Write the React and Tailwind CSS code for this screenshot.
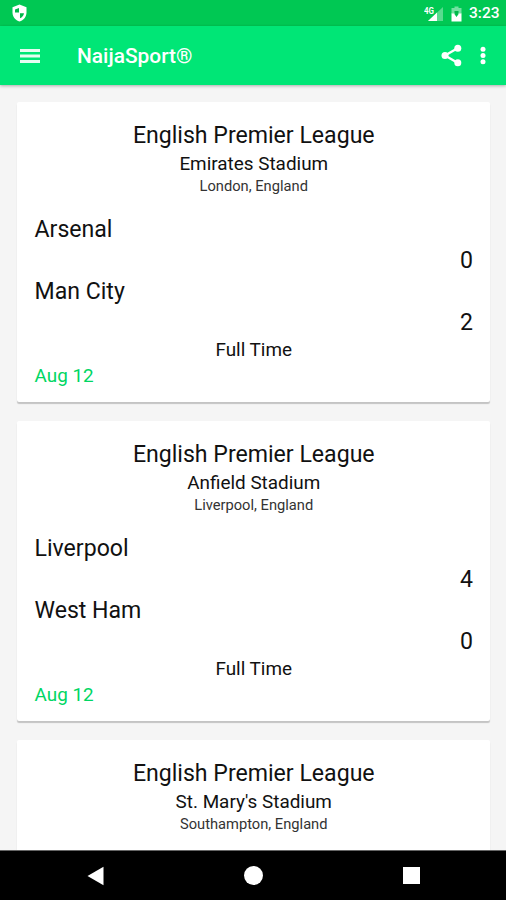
const matches = [
    { id: 1, stadium: 'Emirates Stadium', location: 'London, England', home: 'Arsenal', homeScore: 0, away: 'Man City', awayScore: 2, status: 'Full Time', date: 'Aug 12' },
    { id: 2, stadium: 'Anfield Stadium', location: 'Liverpool, England', home: 'Liverpool', homeScore: 4, away: 'West Ham', awayScore: 0, status: 'Full Time', date: 'Aug 12' },
    { id: 3, stadium: "St. Mary's Stadium", location: 'Southampton, England' },
];

function StatusBar() {
    return (
        <div className="flex h-[26px] shrink-0 items-center bg-[#00c853] pl-[12px] pr-[8px] text-white">
            <svg className="h-[18px] w-[15px]" viewBox="0 0 15 18">
                <path fill="#fff" d="M7.5 0.5 L14.5 3.3 V8.5 C14.5 12.7 11.5 16.4 7.5 17.5 C3.5 16.4 0.5 12.7 0.5 8.5 V3.3 Z" />
                <path fill="#00b84a" d="M7 4 V8.5 H3 V5.5 Z M8 9.2 H12 C11.6 11.6 10.2 13.4 8 14.3 Z" />
            </svg>
            <div className="ml-auto flex items-center pt-px">
                <svg className="h-[16px] w-[20px]" viewBox="0 0 20 16">
                    <path fill="#fff" fillOpacity="0.35" d="M19 1 V15 H4 Z" />
                    <path fill="#fff" d="M13 6.6 V15 H4 Z" />
                    <text x="0" y="7.5" fill="#fff" fontSize="9.5" fontWeight="700" fontFamily="Roboto, sans-serif" textLength="10" lengthAdjust="spacingAndGlyphs">4G</text>
                </svg>
                <svg className="ml-[7px] h-[16px] w-[11px]" viewBox="0 0 11 16">
                    <path fill="#fff" fillOpacity="0.45" d="M3.5 0.5 H7.5 V2 H10.5 V8 H0.5 V2 H3.5 Z" />
                    <path fill="#fff" d="M0.5 7.5 H3 L5.5 11 L8 7.5 H10.5 V15.5 H0.5 Z" />
                    <path fill="#00b84a" d="M3.5 5 H7.5 V7 L5.5 9.5 L3.5 7 Z" />
                </svg>
                <span className="ml-[7px] w-[29px] whitespace-nowrap pt-px text-[15.5px] font-medium leading-none">3:23</span>
            </div>
        </div>
    );
}

function AppBar() {
    return (
        <header className="relative z-10 flex h-[59px] shrink-0 items-center bg-[#00e676] pl-[20px] pr-[20px] text-white shadow-[0_1px_3px_rgba(0,0,0,0.3)]">
            <svg className="h-[14px] w-[20px]" viewBox="0 0 20 14" fill="#fff" fillOpacity="0.9">
                <rect width="20" height="3" />
                <rect y="5.5" width="20" height="3" />
                <rect y="11" width="20" height="3" />
            </svg>
            <h1 className="ml-[37px] pt-px text-[20.9px] font-medium leading-none">NaijaSport®</h1>
            <svg className="ml-auto h-[23px] w-[21px]" viewBox="0 0 21 23" fill="#fff">
                <path d="M16.5 4.2 L4 11.5 L16.5 18.8" fill="none" stroke="#fff" strokeWidth="2.3" />
                <circle cx="16.8" cy="4.2" r="3.5" />
                <circle cx="4" cy="11.5" r="3.5" />
                <circle cx="16.8" cy="18.8" r="3.5" />
            </svg>
            <svg className="ml-[18px] h-[19px] w-[6px]" viewBox="0 0 6 19" fill="#fff">
                <circle cx="3" cy="3.2" r="2.5" />
                <circle cx="3" cy="9.5" r="2.5" />
                <circle cx="3" cy="15.8" r="2.5" />
            </svg>
        </header>
    );
}

function MatchCard({ match }) {
    return (
        <div className="h-[300px] shrink-0 rounded-[2px] bg-white pl-[17.5px] pr-[17px] pt-[18px] text-[23.1px] leading-[31px] text-[#111] shadow-[0_2px_1px_rgba(0,0,0,0.2)]">
            <div className="text-center">
                <h2>English Premier League</h2>
                <p className="text-[18.9px] leading-[25px]">{match.stadium}</p>
                <p className="text-[14.7px] leading-[20px] text-[#333]">{match.location}</p>
            </div>
            {match.status && (
                <>
                    <div className="mt-[18px]">
                        <p>{match.home}</p>
                        <p className="text-right">{match.homeScore}</p>
                        <p>{match.away}</p>
                        <p className="text-right">{match.awayScore}</p>
                    </div>
                    <p className="text-center text-[18.9px] leading-[23px]">{match.status}</p>
                    <p className="text-[18.9px] leading-[29px] text-[#00d663]">{match.date}</p>
                </>
            )}
        </div>
    );
}

function NavBar() {
    return (
        <nav className="flex h-[50px] shrink-0 items-center justify-between border-t border-[#666] bg-black pl-[87px] pr-[86px]">
            <svg className="h-[20px] w-[17px]" viewBox="0 0 17 20">
                <path fill="#fff" d="M0.5 10 L16.5 0.8 V19.2 Z" />
            </svg>
            <div className="h-[19px] w-[19px] rounded-full bg-white" />
            <div className="h-[17px] w-[17px] bg-white" />
        </nav>
    );
}

export default function App() {
    return (
        <div className="flex h-[900px] w-[506px] flex-col overflow-hidden bg-[#f5f5f5] font-[Roboto,sans-serif]">
            <StatusBar />
            <AppBar />
            <main className="flex min-h-0 flex-1 flex-col gap-[19px] overflow-hidden pl-[17px] pr-[16px] pt-[17px]">
                {matches.map((match) => (
                    <MatchCard key={match.id} match={match} />
                ))}
            </main>
            <NavBar />
        </div>
    );
}
